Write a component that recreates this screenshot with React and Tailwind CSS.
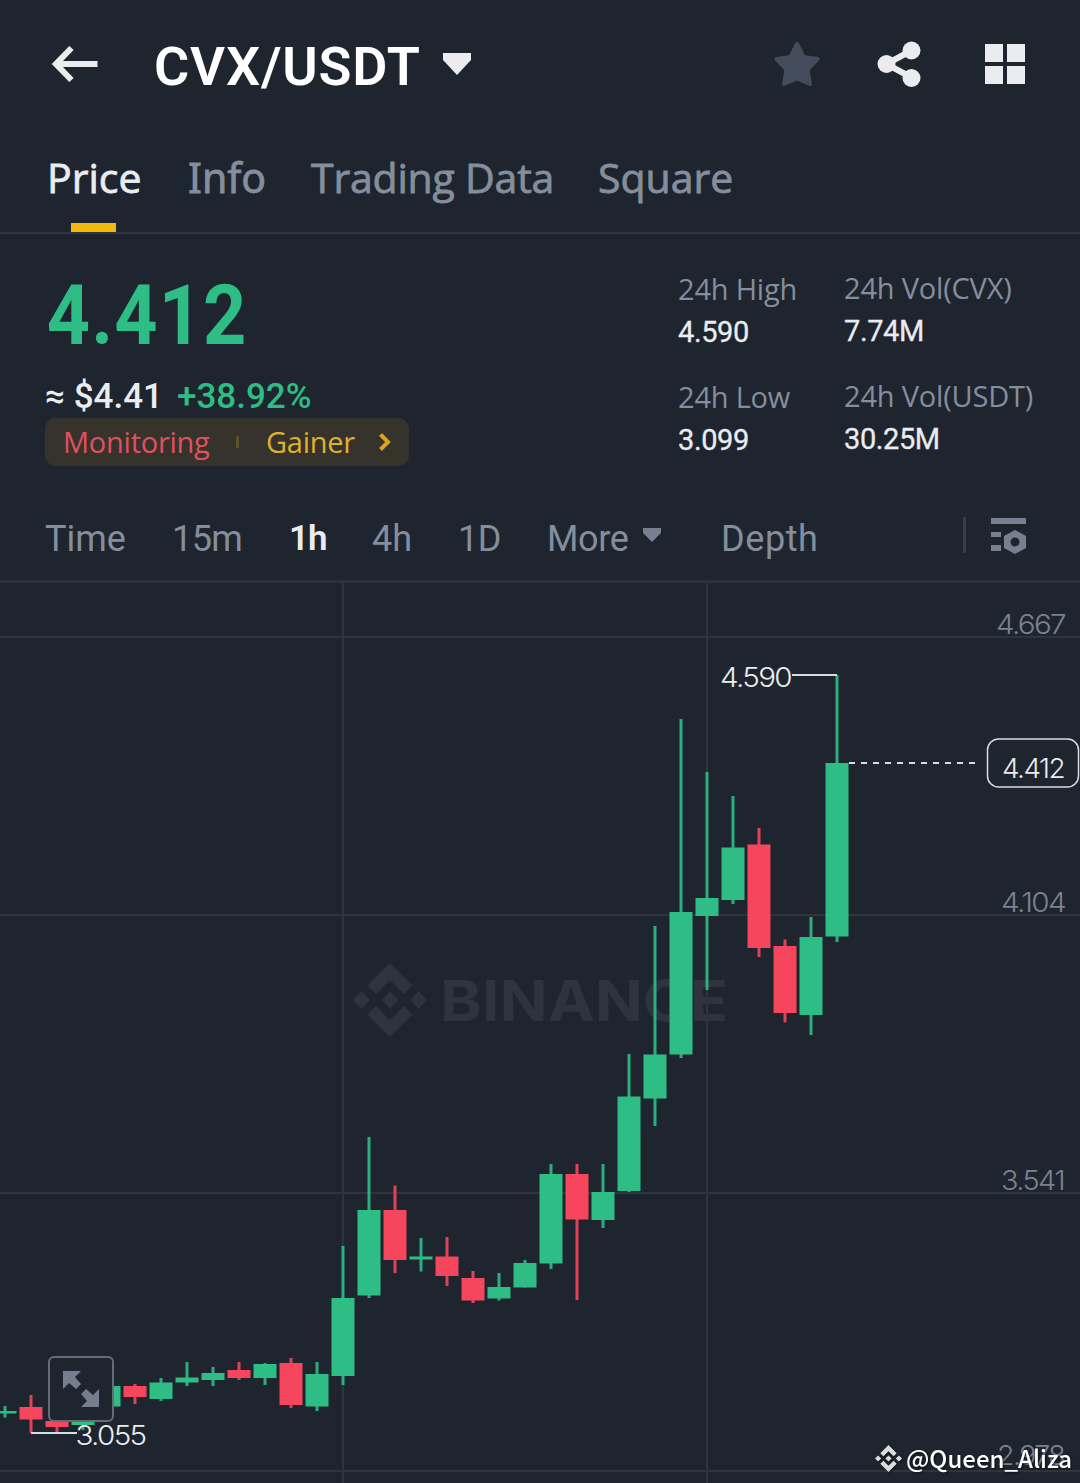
import React from 'react';

const UP = '#2ebd85';
const DOWN = '#f6465d';

// [direction, high, body top, body bottom, low], one candle every 26 units
const candles = [
  ['up', 1406, 1411, 1413.5, 1417.5],
  ['down', 1395, 1407, 1419.5, 1433],
  ['down', 1418, 1421, 1427, 1432],
  ['up', 1415, 1420, 1425, 1430],
  ['up', 1380, 1386, 1406.5, 1410],
  ['down', 1384, 1386, 1397, 1404],
  ['up', 1378, 1382.5, 1399, 1401],
  ['up', 1362, 1377.5, 1382.5, 1386],
  ['up', 1367, 1373, 1380, 1386],
  ['down', 1362, 1370, 1378, 1380],
  ['up', 1363, 1364, 1378, 1385],
  ['down', 1358, 1363, 1405, 1408],
  ['up', 1362, 1374, 1406.5, 1411],
  ['up', 1246, 1298, 1376, 1385],
  ['up', 1137, 1210, 1295.5, 1298],
  ['down', 1185.5, 1210, 1260, 1273],
  ['up', 1238, 1256.5, 1259.5, 1271.5],
  ['down', 1237, 1256.5, 1276, 1286],
  ['down', 1271, 1278, 1300.5, 1303],
  ['up', 1273, 1287, 1298.5, 1300.5],
  ['up', 1260, 1263, 1287.5, 1287.5],
  ['up', 1164, 1174, 1263.5, 1269],
  ['down', 1164, 1174, 1219.5, 1300],
  ['up', 1164, 1192, 1220, 1228],
  ['up', 1054, 1096.5, 1191, 1192],
  ['up', 926, 1054.5, 1098.5, 1126],
  ['up', 719, 912, 1054.5, 1058],
  ['up', 772, 898, 916, 990],
  ['up', 796, 847.5, 900, 904],
  ['down', 828, 844.5, 948, 957],
  ['down', 939.5, 946, 1013, 1022.5],
  ['up', 917, 937, 1015, 1035],
  ['up', 675, 763, 936.5, 942],
];

const axisLabels = [
  { text: '4.667', x: 996, y: 634, width: 69 },
  { text: '4.104', x: 1001, y: 912, width: 64 },
  { text: '3.541', x: 1001, y: 1190, width: 63 },
  { text: '2.978', x: 997, y: 1465, width: 67 },
];

function BinanceMark({ className }) {
  return (
    <svg viewBox="0 0 74 74" className={className} fill="currentColor">
      <path d="M37 0 59.5 22.5 51 31 37 17 23 31 14.5 22.5Z" />
      <path d="M37 74 59.5 51.5 51 43 37 57 23 43 14.5 51.5Z" />
      <path d="M8.500 28.500 17 37 8.500 45.500 0 37Z" />
      <path d="M37 28.500 45.500 37 37 45.500 28.500 37Z" />
      <path d="M65.500 28.500 74 37 65.500 45.500 57 37Z" />
    </svg>
  );
}

function Header() {
  return (
    <header className="flex h-[128px] items-center pl-[52px] pr-[55px] text-[#eaecef]">
      <svg viewBox="0 0 46 36" className="h-9 w-[46px]" fill="none" stroke="currentColor" strokeWidth="6">
        <path d="M45.500 18H5M19.500 2 4 18 19.500 34" />
      </svg>
      <h1 className="ml-[56px] mt-1.5 w-[267px] whitespace-nowrap font-['Roboto',sans-serif] text-[54px] font-semibold leading-none tracking-[0.8px] text-white">
        CVX/USDT
      </h1>
      <svg viewBox="0 0 28 22" className="ml-[22px] h-[22px] w-7" fill="currentColor">
        <path d="M0 0H28V7L14 22 0 7Z" />
      </svg>
      <div className="ml-auto flex items-center">
        <svg viewBox="0 0 46 46" className="h-[46px] w-[46px] text-[#444d5b]" fill="currentColor" stroke="currentColor" strokeWidth="4" strokeLinejoin="round">
          <path d="M23 3 29.500 16 43.500 18 33.500 28.500 36 43 23 37.500 10 43 12.500 28.500 2.500 18 16.500 16Z" />
        </svg>
        <svg viewBox="0 0 44 46" className="ml-[57px] h-[46px] w-11" fill="currentColor">
          <path d="M9.500 23 34.500 9.500M9.500 23 34.500 36.500" stroke="currentColor" strokeWidth="6" />
          <circle cx="9.500" cy="23" r="9" />
          <circle cx="34.500" cy="9.500" r="9" />
          <circle cx="34.500" cy="37" r="9" />
        </svg>
        <svg viewBox="0 0 40 40" className="ml-16 h-10 w-10" fill="currentColor">
          <path d="M0 0H18V18H0ZM22 0H40V18H22ZM0 22H18V40H0ZM22 22H40V40H22Z" />
        </svg>
      </div>
    </header>
  );
}

function Tabs() {
  return (
    <nav className="flex h-[106px] border-b-2 border-[#2f3540] pl-[47px] pt-[21px] font-['Open_Sans',sans-serif] text-[41px] leading-[57px] text-[#848e9c] [-webkit-text-stroke:0.8px]">
      <div className="flex w-[141px] flex-col justify-between">
        <span className="whitespace-nowrap text-[#eaecef]">Price</span>
        <span className="ml-6 h-[9px] w-[45px] bg-[#f0b90b]" />
      </div>
      <span className="w-[123px] whitespace-nowrap font-['Noto_Sans',sans-serif]">Info</span>
      <span className="w-[287px] whitespace-nowrap tracking-[-0.2px]">Trading Data</span>
      <span className="whitespace-nowrap">Square</span>
    </nav>
  );
}

function Stat({ label, value }) {
  return (
    <div className="h-[108px]">
      <div className="whitespace-nowrap font-['Open_Sans',sans-serif] text-[29px] leading-[40px] tracking-[-0.2px] text-[#848e9c]">{label}</div>
      <div className="mt-0.5 font-['Roboto',sans-serif] text-[29px] leading-[42px] tracking-[-0.4px] text-[#eaecef] [-webkit-text-stroke:0.3px]">{value}</div>
    </div>
  );
}

function Summary() {
  return (
    <section className="flex h-[262px] justify-between">
      <div className="pl-[45px] pt-[42px] font-['Roboto',sans-serif]">
        <div className="origin-left scale-x-[0.91] pl-[2px] text-[83px] font-bold leading-[80px] tracking-[1.2px] text-[#2ebd85]">4.412</div>
        <div className="mt-[19px] flex h-[43px] text-[35px] font-medium leading-[44px]">
          <span className="w-[132px] whitespace-nowrap text-[#eaecef]">≈ $4.41</span>
          <span className="text-[#2ebd85]">+38.92%</span>
        </div>
        <div className="flex h-12 w-[364px] items-center rounded-[11px] bg-[#35332c] pl-[18px] font-['Open_Sans',sans-serif] text-[29px] tracking-[-0.25px]">
          <span className="w-[173px] text-[#e0505f]">Monitoring</span>
          <span className="h-3 w-[3px] bg-[#5d4f28]" />
          <span className="ml-[27px] w-[113px] text-[#e0b02c]">Gainer</span>
          <svg viewBox="0 0 12 18" className="h-[18px] w-3" fill="none" stroke="#d9a51f" strokeWidth="4">
            <path d="M1.500 1.500 9 9 1.500 16.500" />
          </svg>
        </div>
      </div>
      <div className="flex w-[402px] pt-[34px]">
        <div className="w-[166px] pt-px">
          <Stat label="24h High" value="4.590" />
          <Stat label="24h Low" value="3.099" />
        </div>
        <div>
          <Stat label="24h Vol(CVX)" value="7.74M" />
          <Stat label="24h Vol(USDT)" value="30.25M" />
        </div>
      </div>
    </section>
  );
}

function Intervals() {
  return (
    <div className="flex h-[87px] items-center border-b-[3px] border-[#2b303c] pl-[45px] font-['Roboto',sans-serif] text-[36px] text-[#848e9c]">
      <span className="mt-0.5 w-[127px]">Time</span>
      <span className="mt-0.5 w-[117px] tracking-[-0.6px]">15m</span>
      <span className="mt-0.5 w-[83px] text-[35px] font-semibold tracking-[-1px] text-[#eaecef]">1h</span>
      <span className="mt-0.5 w-[86px]">4h</span>
      <span className="mt-0.5 w-[89px] tracking-[-0.4px]">1D</span>
      <span className="mt-0.5 w-[96px] tracking-[-0.4px]">More</span>
      <svg viewBox="0 0 18 14" className="-mt-1.5 h-3.5 w-[18px]" fill="#76808f">
        <path d="M0 0H18V5L9 14 0 5Z" />
      </svg>
      <span className="ml-[60px] mt-0.5 tracking-[0.6px]">Depth</span>
      <span className="-mt-1.5 ml-auto h-9 w-[3px] bg-[#373d49]" />
      <svg viewBox="0 0 36 36" className="-mt-1 ml-[25px] mr-[53px] h-9 w-9" fill="#76808f">
        <path d="M0 0H35V6H0ZM0 14H10V19H0ZM0 27H10V33H0Z" />
        <path fillRule="evenodd" d="M24 12 35 18V30L24 36 13 30V18ZM24 19.500a4.500 4.500 0 1 0 0 9a4.500 4.500 0 1 0 0-9Z" />
      </svg>
    </div>
  );
}

function Chart() {
  return (
    <section className="relative h-[900px]">
      <div className="absolute left-[353px] top-[380px] flex items-center text-[#2f333e]">
        <BinanceMark className="h-[74px] w-[74px]" />
      </div>
      <svg viewBox="0 583 1080 900" className="relative block h-[900px] w-full font-['Inter',sans-serif] text-[27px] font-light">
        <path d="M0 637H1080M0 915H1080M0 1193H1080M0 1471H1080M343 583V1483M707 583V1483" stroke="#2f343f" strokeWidth="2" />
        <text x="440" y="1020.500" textLength="288" lengthAdjust="spacingAndGlyphs" fill="#2f333e" className="text-[57px] font-bold">BINANCE</text>
        {axisLabels.map(l => (
          <text key={l.text} x={l.x} y={l.y} textLength={l.width} lengthAdjust="spacingAndGlyphs" fill="#7b828f" className="tracking-[-1.5px]">{l.text}</text>
        ))}
        {candles.map(([dir, high, top, bottom, low], i) => {
          const x = 5 + i * 26;
          const color = dir === 'up' ? UP : DOWN;
          return (
            <g key={x} fill={color}>
              <rect x={x - 1.5} y={high} width="3" height={low - high} opacity="0.9" />
              <rect x={x - 11.5} y={top} width="23" height={bottom - top} />
            </g>
          );
        })}
        <g stroke="#d8dbe0" strokeWidth="1.800" fill="none">
          <path d="M792 675H837M31 1433H77" />
          <path d="M849 763H975" strokeDasharray="6 6" />
          <rect x="987.500" y="739" width="91" height="48" rx="11" strokeWidth="1.500" />
        </g>
        <g fill="#eaecef" className="tracking-[-1.5px]">
          <text x="720" y="687" textLength="71" lengthAdjust="spacingAndGlyphs">4.590</text>
          <text x="1002" y="778" textLength="62" lengthAdjust="spacingAndGlyphs">4.412</text>
          <text x="75.500" y="1445" textLength="70" lengthAdjust="spacingAndGlyphs">3.055</text>
        </g>
      </svg>
      <button className="absolute left-12 top-[773px] flex h-[66px] w-[66px] items-center justify-center rounded-md border-2 border-[#666b78] bg-[#1f252f]" aria-label="Full screen">
        <svg viewBox="0 0 36 36" className="h-9 w-9" fill="#767d8d">
          <path d="M0 0H18L12 6 18 13 13 18 6 12 0 18Z" />
          <path d="M36 36H18L24 30 18 23 23 18 30 24 36 18Z" />
        </svg>
      </button>
      <div className="absolute right-[8px] top-[857px] flex items-center text-white drop-shadow-[1px_1px_1px_rgba(0,0,0,0.6)]">
        <BinanceMark className="mr-1 h-[27px] w-[27px] text-[#dcdcdc]" />
        <span className="whitespace-nowrap font-['Noto_Sans_CJK_SC',sans-serif] text-[24px] font-medium leading-9">@Queen_Aliza</span>
      </div>
    </section>
  );
}

export default function App() {
  return (
    <main className="h-[1483px] w-[1080px] overflow-hidden bg-[#1f252f]">
      <Header />
      <Tabs />
      <Summary />
      <Intervals />
      <Chart />
    </main>
  );
}
